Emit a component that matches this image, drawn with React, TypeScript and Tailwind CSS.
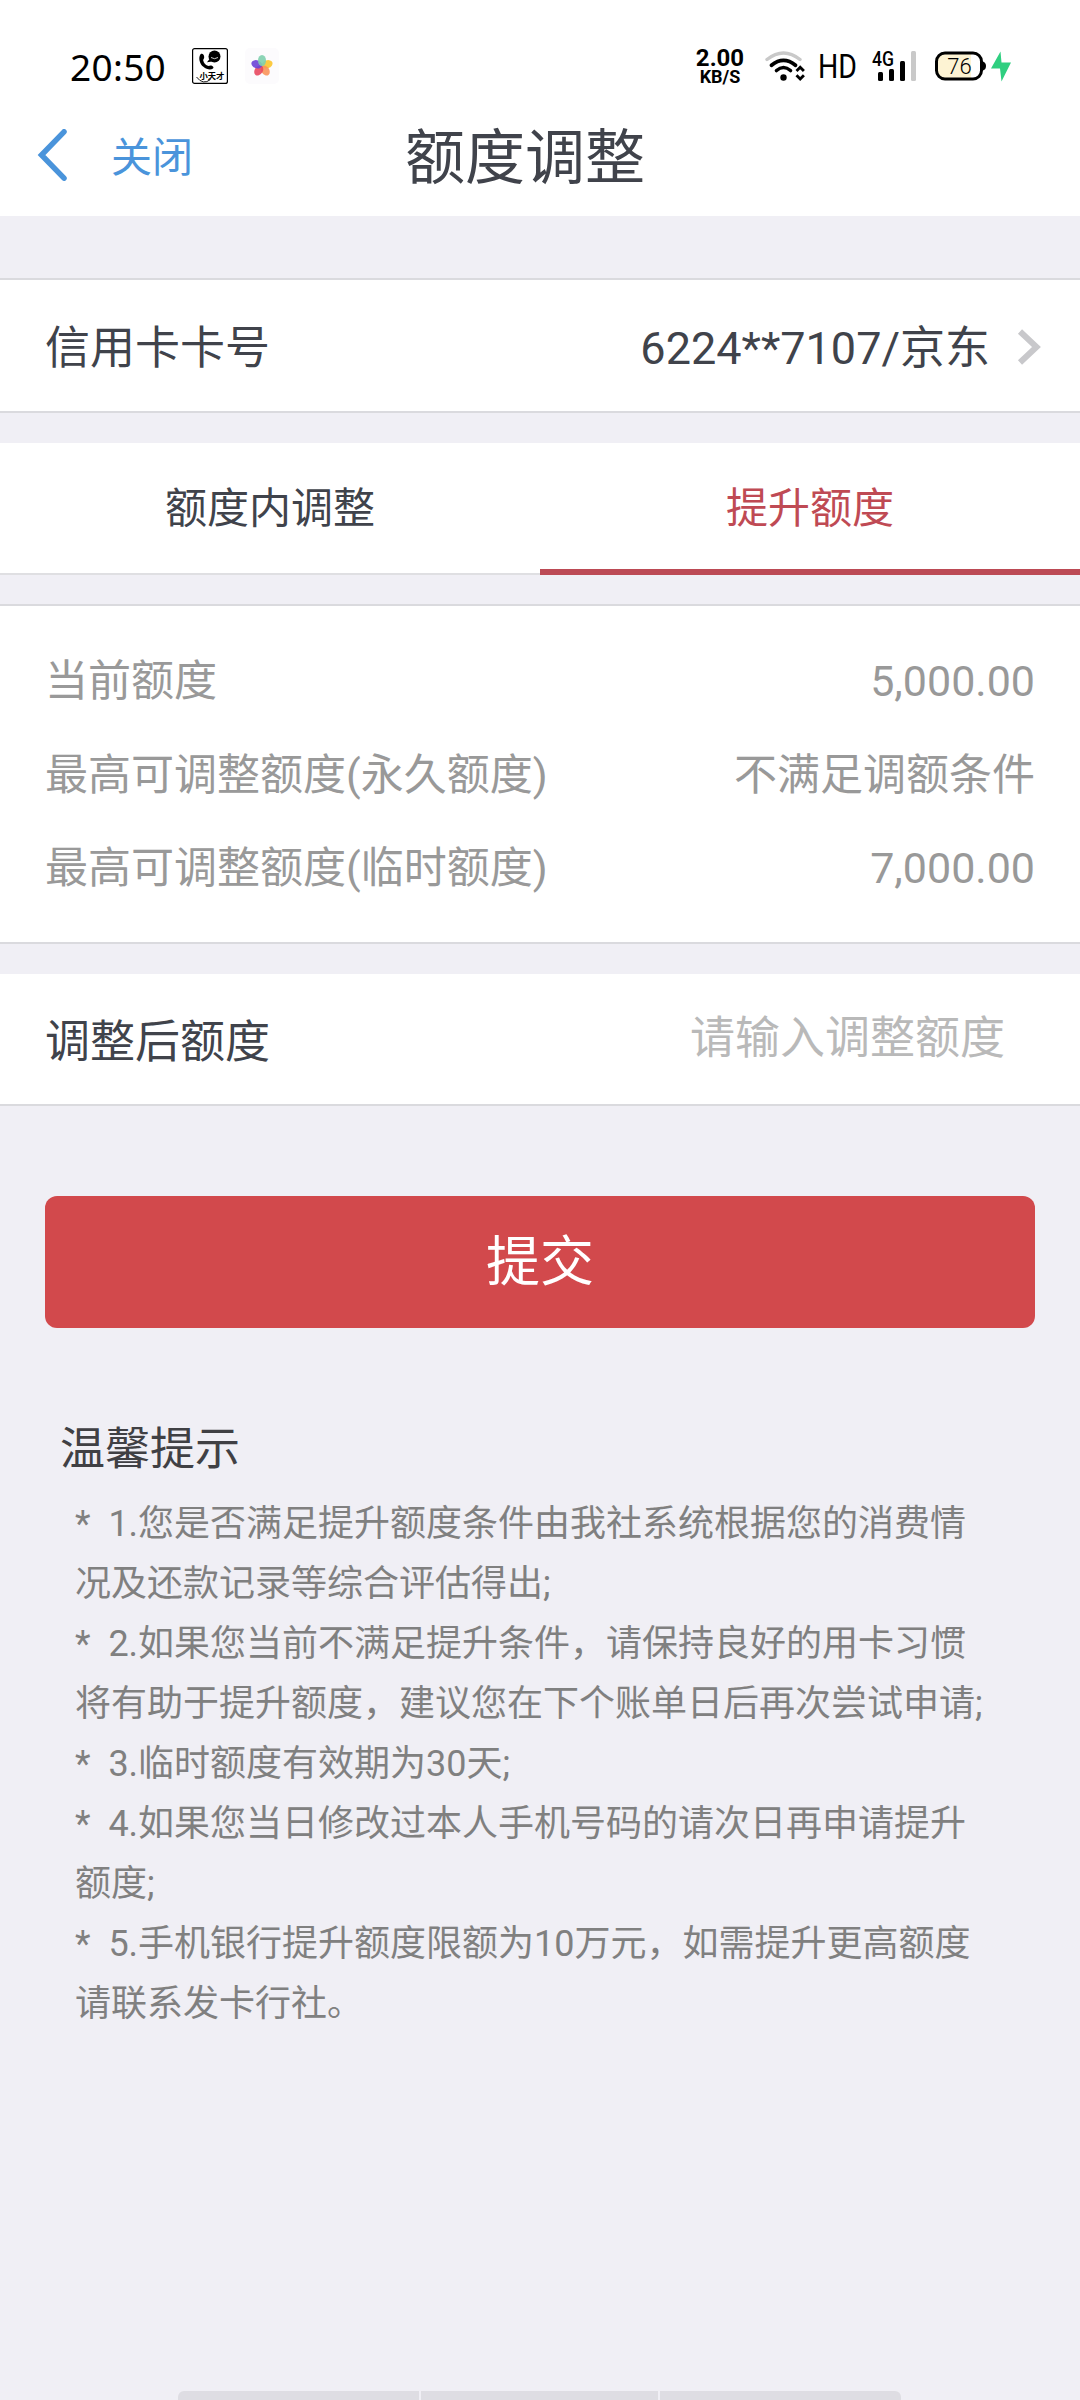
import { useState } from 'react';

const limits = [
  { label: '当前额度', value: '5,000.00' },
  { label: '最高可调整额度(永久额度)', value: '不满足调额条件' },
  { label: '最高可调整额度(临时额度)', value: '7,000.00' },
];

const tips = [
  ['1.您是否满足提升额度条件由我社系统根据您的消费情', '况及还款记录等综合评估得出;'],
  ['2.如果您当前不满足提升条件，请保持良好的用卡习惯', '将有助于提升额度，建议您在下个账单日后再次尝试申请;'],
  ['3.临时额度有效期为30天;'],
  ['4.如果您当日修改过本人手机号码的请次日再申请提升', '额度;'],
  ['5.手机银行提升额度限额为10万元，如需提升更高额度', '请联系发卡行社。'],
];

const tabs = ['额度内调整', '提升额度'];

const petals = [
  { angle: 72, color: '#fcc42c' },
  { angle: 144, color: '#f9935a' },
  { angle: 216, color: '#e8485f' },
  { angle: 288, color: '#6a43d6' },
  { angle: 0, color: '#7fcfae' },
];

function WatchIcon() {
  return (
    <svg className="h-9 w-9 overflow-visible" viewBox="0 0 36 36">
      <rect x="0.6" y="0.6" width="34.8" height="34.8" rx="2" fill="#fff" stroke="#000" strokeWidth="1.2" />
      <path d="M8.500 6.200c2-1.200 3.700.5 3.700 3 0 1.500-1.200 2-1 3.200.6 2.400 2.200 4.200 4.600 5.400 1.400.4 2.200-.8 3.600-.2 2 .8 2.600 2 1.600 3-2.600 1.800-6.600.8-9.600-1.800C7.600 16 6 9.800 8.500 6.200z" fill="#000" />
      <circle cx="22.500" cy="8.500" r="6" fill="#000" />
      <path d="M17.500 11l-2.500 3.300 5-.9z" fill="#000" />
      <path d="M19 9.500q3.500 2.400 7 0" fill="none" stroke="#fff" strokeWidth="0.8" />
      <text x="7.500" y="30.500" fontSize="8.300" className="font-bold font-['Noto_Sans_CJK_SC',sans-serif]">小天才</text>
      <path d="M4.500 29q6.500 8.500 14 2.500" fill="none" stroke="#000" strokeWidth="0.9" />
    </svg>
  );
}

function FlowerIcon() {
  return (
    <svg className="ml-[17px] h-9 w-[34px]" viewBox="0 0 34 36">
      <rect width="34" height="36" rx="5" fill="#fcfbfd" />
      {petals.map((p) => (
        <ellipse key={p.angle} cx="17" cy="12.500" rx="4" ry="5.500" fill={p.color} fillOpacity="0.9" transform={`rotate(${p.angle} 17 18)`} />
      ))}
    </svg>
  );
}

function WifiIcon() {
  return (
    <svg className="ml-5 h-[32px] w-[40px]" viewBox="0 0 40 32">
      <g fill="none" strokeLinecap="round">
        <path d="M2 9.500Q18.500-3.500 35 9.500" stroke="#c9c9c9" strokeWidth="3.400" />
        <path d="M6.500 15.200Q18.500 5.500 30.500 15.200" stroke="#000" strokeWidth="3.800" />
        <path d="M11.500 20.500Q18.500 14.500 25.500 20.500" stroke="#000" strokeWidth="3.600" />
        <path d="M31.500 21l3.700-3.800 3.700 3.800M31.500 25.200l3.700 3.800 3.700-3.800" stroke="#000" strokeWidth="2.800" strokeLinecap="butt" />
      </g>
      <circle cx="18.500" cy="27.500" r="3.200" />
    </svg>
  );
}

function SignalIcon() {
  return (
    <svg className="ml-[14px] h-[32px] w-[48px] overflow-visible" viewBox="0 0 48 32">
      <text x="1" y="16" fontSize="21" textLength="22" lengthAdjust="spacingAndGlyphs" className="font-[Roboto,sans-serif] font-medium">4G</text>
      <rect x="7" y="22" width="5" height="9" rx="1.500" />
      <rect x="18" y="19" width="5" height="12" rx="1.500" />
      <rect x="29" y="11" width="5" height="20" rx="1.500" />
      <rect x="40" y="1" width="5" height="30" rx="1.500" fill="#c9c9c9" />
    </svg>
  );
}

function BatteryIcon() {
  return (
    <svg className="ml-4 h-[32px] w-[78px]" viewBox="0 0 78 32">
      <rect x="1.500" y="3" width="45" height="26" rx="8.500" fill="#fff" />
      <path d="M10 3h26v26H10a8.500 8.500 0 0 1-8.500-8.500v-9A8.500 8.500 0 0 1 10 3z" fill="#fdf3d3" />
      <rect x="1.500" y="3" width="45" height="26" rx="8.500" fill="none" stroke="#000" strokeWidth="3" />
      <path d="M48 11.500q3 1 3 4.500t-3 4.500z" />
      <text x="24.500" y="23.500" fontSize="22" textAnchor="middle" className="font-[Roboto,sans-serif] font-light">76</text>
      <path d="M65.500 1.500L56 18.500h9L66.500 31.500 76 12.500h-9.500z" fill="#2fcf80" />
    </svg>
  );
}

function StatusBar() {
  return (
    <div className="flex h-[132px] items-center text-black">
      <span className="ml-[70px] w-[122px] text-[37px] leading-none tracking-[0.3px] font-['Noto_Sans',sans-serif]">20:50</span>
      <WatchIcon />
      <FlowerIcon />
      <div className="ml-auto flex w-[50px] flex-col items-center pt-px font-bold">
        <span className="text-[24px] leading-[20px]">2.00</span>
        <span className="text-[18px] leading-[17px]">KB/S</span>
      </div>
      <WifiIcon />
      <svg className="ml-[14px] h-[32px] w-[38px] overflow-visible" viewBox="0 0 38 32">
        <text x="-1" y="28" fontSize="34" textLength="39" lengthAdjust="spacingAndGlyphs">HD</text>
      </svg>
      <SignalIcon />
      <BatteryIcon />
      <div className="w-[67px]" />
    </div>
  );
}

export default function App() {
  const [activeTab, setActiveTab] = useState(1);
  const [amount, setAmount] = useState('');

  return (
    <div className="flex h-[2400px] w-[1080px] flex-col overflow-hidden bg-[#f0eff5] text-[45px] text-[#40434b] font-[Roboto,'Noto_Sans_CJK_SC',sans-serif]">
      <header className="h-[216px] bg-white">
        <StatusBar />
        <div className="-mt-[3px] grid h-[50px] grid-cols-[405px_240px_1fr] items-center">
          <button className="flex items-center text-[41px] leading-[50px] text-[#4a94db]">
            <svg className="mb-1 ml-9 mr-[42px] h-[54px] w-[33px]" viewBox="0 0 33 54" fill="none" stroke="currentColor" strokeWidth="5.500" strokeLinecap="round">
              <path d="M28 2.800L5.500 26L28 49.200" />
            </svg>
            关闭
          </button>
          <h1 className="whitespace-nowrap pt-0.5 text-[60px] leading-[50px]">额度调整</h1>
        </div>
      </header>

      <section className="mt-[62px] flex h-[135px] items-center justify-between border-y-2 border-[#dadade] bg-white pl-[45px] pr-[38px]">
        <span className="pt-[7px]">信用卡卡号</span>
        <div className="flex items-center">
          <span className="pt-[6px]">6224**7107/京东</span>
          <svg className="ml-[27px] mt-[3px] h-9 w-[25px]" viewBox="0 0 25 36" fill="none" stroke="#c8c8cb" strokeWidth="6">
            <path d="M3 2.500L19.500 18L3 33.500" />
          </svg>
        </div>
      </section>

      <nav className="mt-[30px] grid h-[132px] grid-cols-2 bg-white text-[42px]">
        {tabs.map((tab, i) => (
          <button
            key={tab}
            onClick={() => setActiveTab(i)}
            className={
              i === activeTab
                ? 'border-b-[6px] border-[#bc4a55] pt-[5px] text-[#bf4a54]'
                : 'border-b-2 border-[#dfdfe2] pt-px'
            }
          >
            {tab}
          </button>
        ))}
      </nav>

      <section className="mt-[29px] h-[340px] border-t-2 border-b-2 border-[#dadade] bg-white px-[45px] pt-[29px] text-[43px] text-[#999]">
        {limits.map((row) => (
          <div key={row.label} className="flex h-[93.300px] items-center justify-between">
            <span>{row.label}</span>
            <span>{row.value}</span>
          </div>
        ))}
      </section>

      <label className="mt-[30px] flex h-[132px] items-center justify-between border-b-2 border-[#dadade] bg-white pl-[45px] pr-[75px]">
        <span className="pt-[7px]">调整后额度</span>
        <input
          value={amount}
          onChange={(e) => setAmount(e.target.value)}
          placeholder="请输入调整额度"
          className="w-[400px] pb-px text-right outline-none placeholder:text-[#b9b9b9]"
        />
      </label>

      <button className="mx-[45px] mt-[90px] h-[132px] shrink-0 rounded-xl bg-[#d2494c] text-[54px] text-white">提交</button>

      <section className="mt-[88px] pl-[60px]">
        <h2 className="text-[45px] leading-[68px] text-[#404044]">温馨提示</h2>
        <ul className="mt-[10px] pl-[15px] text-[36px] leading-[60px] text-[#808080]">
          {tips.map((lines) => (
            <li key={lines[0]} className="whitespace-nowrap">
              *&nbsp;&nbsp;
              {lines.map((line) => (
                <span key={line}>
                  {line}
                  <br />
                </span>
              ))}
            </li>
          ))}
        </ul>
      </section>

      <div className="mt-auto ml-[178px] flex h-[9px] w-[723px] gap-[2px] overflow-hidden rounded-t-[6px] text-[#dedde3]">
        <div className="w-[241px] bg-current" />
        <div className="w-[237px] bg-current" />
        <div className="flex-1 bg-current" />
      </div>
    </div>
  );
}
